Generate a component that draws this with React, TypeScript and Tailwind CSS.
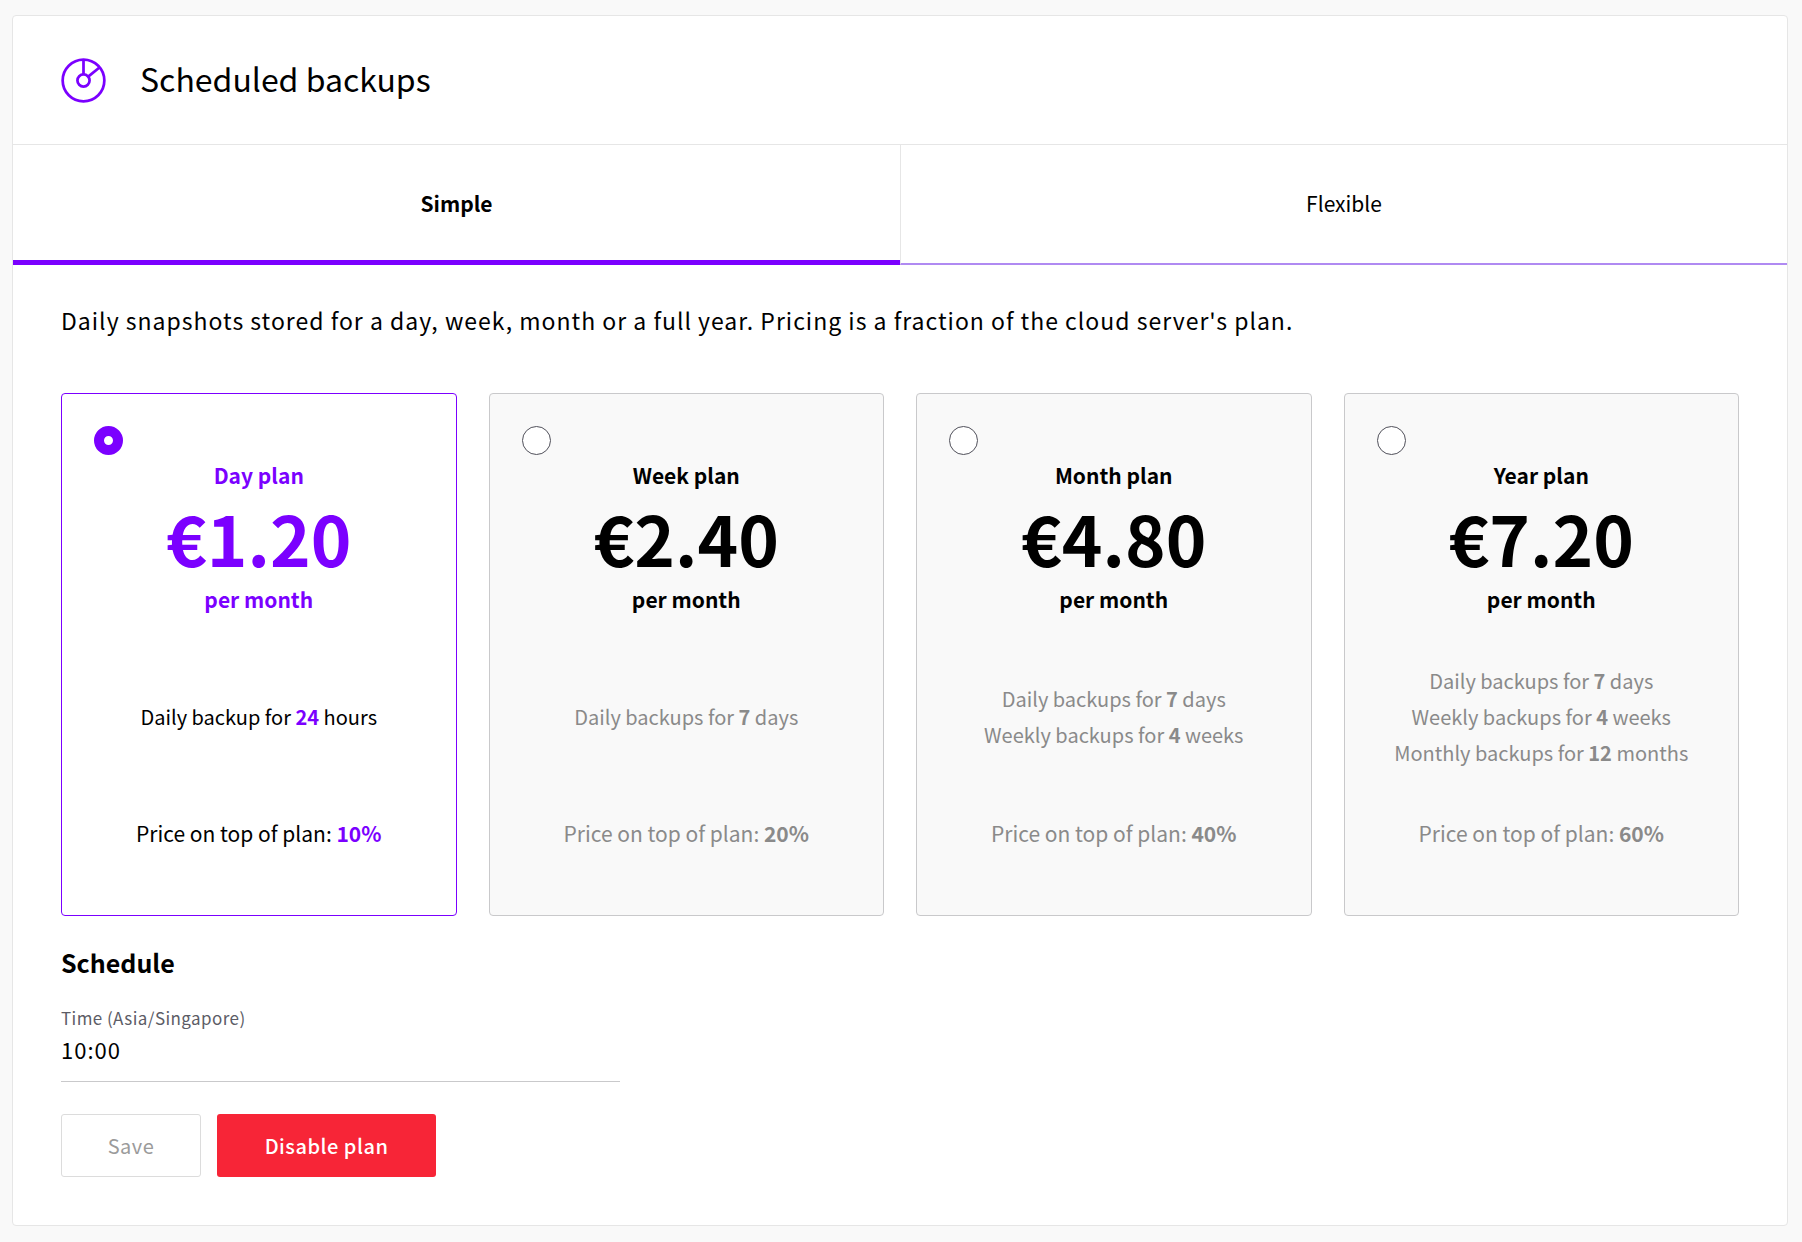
import React, { useState } from 'react';
import clsx from 'clsx';

const plans = [
  {
    id: 'day',
    name: 'Day plan',
    price: '€1.20',
    percent: '10%',
    details: [{ before: 'Daily backup for', count: '24', after: 'hours' }],
  },
  {
    id: 'week',
    name: 'Week plan',
    price: '€2.40',
    percent: '20%',
    details: [{ before: 'Daily backups for', count: '7', after: 'days' }],
  },
  {
    id: 'month',
    name: 'Month plan',
    price: '€4.80',
    percent: '40%',
    details: [
      { before: 'Daily backups for', count: '7', after: 'days' },
      { before: 'Weekly backups for', count: '4', after: 'weeks' },
    ],
  },
  {
    id: 'year',
    name: 'Year plan',
    price: '€7.20',
    percent: '60%',
    details: [
      { before: 'Daily backups for', count: '7', after: 'days' },
      { before: 'Weekly backups for', count: '4', after: 'weeks' },
      { before: 'Monthly backups for', count: '12', after: 'months' },
    ],
  },
];

type Plan = (typeof plans)[number];

function BackupIcon() {
  return (
    <svg className="size-[45px]" viewBox="0 0 46 46" fill="none" stroke="#7b00ff" strokeWidth="2.8" aria-hidden="true">
      <circle cx="23" cy="23" r="21.3" />
      <circle cx="23" cy="23" r="6.2" />
      <path d="M23 2v15M27.8 19L39 10" />
    </svg>
  );
}

function PlanCard({ plan, selected, onSelect }: { plan: Plan; selected: boolean; onSelect: () => void }) {
  return (
    <label
      className={clsx(
        'block cursor-pointer rounded-[4px] border p-8 pb-16 text-center',
        selected ? 'border-[#7b00ff] bg-white text-black' : 'border-[#c9c9cb] bg-[#f9f9f9] text-[#8a8a8a]'
      )}
    >
      <input
        type="radio"
        name="plan"
        value={plan.id}
        checked={selected}
        onChange={onSelect}
        className="block size-[29px] appearance-none rounded-full border border-[#50505a] bg-white checked:border-[10px] checked:border-[#7b00ff]"
      />
      <div className={clsx('mt-1 font-bold', selected ? 'text-[#7b00ff]' : 'text-black')}>
        <div className="text-[21px] leading-8">{plan.name}</div>
        <div className="text-[69px] leading-[92px]">{plan.price}</div>
        <div className="text-[21px] leading-8">per month</div>
      </div>
      <div className="mt-12 flex min-h-[108px] flex-col justify-center text-[20px] leading-9">
        {plan.details.map((detail) => (
          <p key={detail.before}>
            {detail.before} <b className={clsx('font-bold', selected && 'text-[#7b00ff]')}>{detail.count}</b>{' '}
            {detail.after}
          </p>
        ))}
      </div>
      <p className="mt-11 text-[21px] leading-9">
        Price on top of plan: <b className={clsx('font-bold', selected && 'text-[#7b00ff]')}>{plan.percent}</b>
      </p>
    </label>
  );
}

export default function App() {
  const [selectedPlan, setSelectedPlan] = useState('day');

  return (
    <div className="min-h-screen bg-[#f9f9f9] pt-[15px] pr-[14px] pb-4 pl-3 font-['Noto_Sans_CJK_SC',sans-serif] text-black">
      <main className="rounded-[4px] border border-[#e6e6e6] bg-white">
        {/* Header */}
        <header className="flex h-32 items-center gap-[34px] px-12">
          <BackupIcon />
          <h1 className="pb-1 text-[32px] leading-10">Scheduled backups</h1>
        </header>

        {/* Tabs */}
        <div role="tablist" className="grid h-[121px] grid-cols-2 border-t border-[#e6e6e6] text-[21px]">
          <button
            type="button"
            role="tab"
            aria-selected="true"
            className="border-b-[5px] border-[#7b00ff] pt-[3px] font-bold"
          >
            Simple
          </button>
          <button
            type="button"
            role="tab"
            aria-selected="false"
            className="border-b-2 border-l border-b-[#b08af2] border-l-[#e6e6e6]"
          >
            Flexible
          </button>
        </div>

        <div className="px-12 pt-[35px] pb-12">
          <p className="text-[23px] leading-10 tracking-[1px]">
            Daily snapshots stored for a day, week, month or a full year. Pricing is a fraction of the cloud server's
            plan.
          </p>

          {/* Plans */}
          <div className="mt-[53px] grid grid-cols-4 gap-8">
            {plans.map((plan) => (
              <PlanCard
                key={plan.id}
                plan={plan}
                selected={plan.id === selectedPlan}
                onSelect={() => setSelectedPlan(plan.id)}
              />
            ))}
          </div>

          {/* Schedule */}
          <h2 className="mt-7 text-[25px] leading-9 font-bold">Schedule</h2>
          <div className="mt-6 w-1/3">
            <label htmlFor="time" className="block text-[17px] leading-7 tracking-wide text-[#5c5c66]">
              Time (Asia/Singapore)
            </label>
            <input
              id="time"
              type="text"
              defaultValue="10:00"
              className="block h-[50px] w-full border-b border-[#c9c9cb] pb-4 text-[22px] tracking-[1px] outline-none"
            />
          </div>

          {/* Actions */}
          <div className="mt-8 flex gap-4">
            <button
              type="button"
              disabled
              className="h-[63px] w-[140px] rounded-[3px] border border-[#dcdcdc] text-[20px] tracking-wide text-[#9b9b9b]"
            >
              Save
            </button>
            <button
              type="button"
              className="h-[63px] w-[219px] rounded-[3px] bg-[#f72537] text-[20px] font-medium tracking-wide text-white"
            >
              Disable plan
            </button>
          </div>
        </div>
      </main>
    </div>
  );
}
